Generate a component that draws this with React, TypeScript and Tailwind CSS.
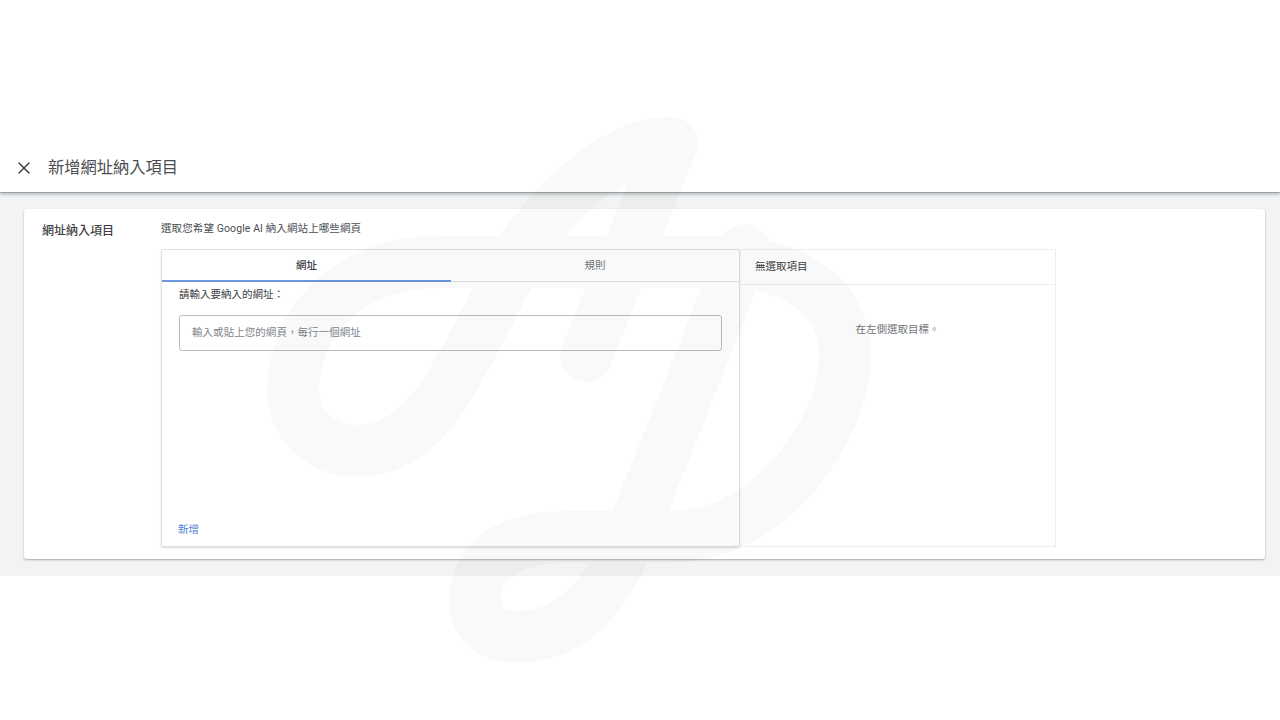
import { X } from 'lucide-react'

const FONT = "font-['Roboto','Noto_Sans_CJK_TC',sans-serif]"

export default function App() {
  return (
    <div className={`relative h-[720px] w-[1280px] overflow-hidden bg-white ${FONT}`}>
      <div className="h-[144px]" />

      {/* Header */}
      <div className="relative z-10 flex h-[48px] items-center bg-white pl-[14px] shadow-[0_1px_0_rgba(60,64,67,0.3),0_3px_3px_rgba(60,64,67,0.25)]">
        <X size={20} strokeWidth={1.8} className="text-[#3c4043]" />
        <h1 className="ml-[14px] text-[16.25px] leading-none font-normal text-[#4a4e52]">新增網址納入項目</h1>
      </div>

      {/* Content */}
      <div className="h-[384px] bg-[#f1f3f4] pt-[17px] pr-[15px] pl-[24px]">
        <div className="flex h-[350px] rounded-[3px] bg-white pt-[12px] pl-[18px] shadow-[0_1px_2px_rgba(60,64,67,0.4)]">
          <div className="w-[119px] shrink-0 pt-[1px] text-[12px] leading-[18px] font-medium text-[#3c4043]">網址納入項目</div>
          <div className="flex flex-col">
            <p className="h-[28px] pt-[1px] text-[10.5px] leading-[14px] tracking-[0.1px] text-[#4a4e52]">選取您希望 Google AI 納入網站上哪些網頁</p>
            <div className="flex h-[298px] w-[895px]">
              {/* Left panel */}
              <div className="flex w-[579px] flex-col rounded-[2px] border border-[#e0e0e0] shadow-[0_1px_2px_rgba(60,64,67,0.2)]">
                <div className="flex h-[32px] shrink-0 border-b border-[#e4e4e4] text-[10.5px]">
                  <div className="relative flex w-[289px] items-center justify-center font-medium text-[#3c4043]">
                    網址
                    <div className="absolute inset-x-0 -bottom-px h-[2px] bg-[#6b97dc]" />
                  </div>
                  <div className="flex flex-1 items-center justify-center text-[#70757a]">規則</div>
                </div>
                <div className="flex flex-1 flex-col pr-[17px] pl-[17px]">
                  <p className="mt-[6px] text-[10.5px] leading-[14px] text-[#3c4043]">請輸入要納入的網址：</p>
                  <div className="mt-[13px] flex h-[36px] items-center rounded-[3px] border border-[#bdbdbd] pl-[12px] text-[10.5px] tracking-[0.05px] text-[#80868b]">輸入或貼上您的網頁，每行一個網址</div>
                  <div className="flex-1" />
                  <span className="mb-[9px] -ml-px text-[10.5px] leading-[14px] text-[#4a7fd6]">新增</span>
                </div>
              </div>
              {/* Right panel */}
              <div className="flex w-[316px] flex-col border-y border-r border-[#eeeeee]">
                <div className="flex h-[35px] shrink-0 items-center border-b border-[#eeeeee] pl-[15px] text-[10.5px] text-[#3c4043]">無選取項目</div>
                <p className="mt-[38px] text-center text-[10.5px] leading-[14px] text-[#70757a]">在左側選取目標。</p>
              </div>
            </div>
          </div>
        </div>
      </div>

      {/* Watermark */}
      <svg className="pointer-events-none absolute top-0 left-0 z-20" width="1280" height="720" viewBox="0 0 1280 720" fill="none">
        <path
          d="M586 356 L672 143 C625 143 575 180 530 238 C510 265 480 340 442 397 C420 430 390 451 360 451 C320 451 293 425 293 390 C293 330 340 262 440 262 L720 262 C800 262 845 300 845 355 C845 430 770 537 670 537 L565 537 C510 537 475 560 475 600 C475 625 495 637 515 637 C570 637 600 600 620 560 L640 512 L685 400 L731 283 L745 250"
          stroke="#000"
          strokeOpacity="0.025"
          strokeWidth="52"
          strokeLinecap="round"
          strokeLinejoin="round"
        />
      </svg>
    </div>
  )
}
